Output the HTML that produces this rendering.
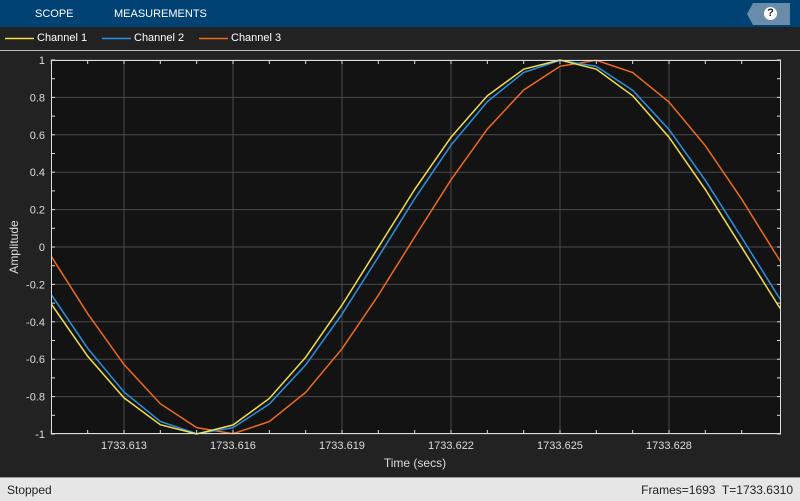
<!DOCTYPE html>
<html><head><meta charset="utf-8"><style>
body{margin:0;width:800px;height:500px;overflow:hidden;background:#222;font-family:"Liberation Sans",sans-serif;position:relative}
.hdr{position:absolute;left:0;top:0;width:800px;height:27px;background:#004274}
.hdr span{position:absolute;top:8px;color:#fff;font-size:11px}
.help{position:absolute;left:747px;top:3px;width:43px;height:22px;background:#6a8cab;clip-path:polygon(0 50%,6px 0,100% 0,100% 100%,6px 100%)}
.q{position:absolute;left:764px;top:7px;width:13px;height:13px;border-radius:50%;background:#fff;color:#222;font-size:11px;font-weight:bold;text-align:center;line-height:13px}
.leg{position:absolute;top:32px;color:#fff;font-size:11px}
.sep{position:absolute;left:0;top:50px;width:800px;height:1px;background:#bbb}
.status{position:absolute;left:0;top:477px;width:800px;height:23px;background:#e6e6e6;border-top:1px solid #999;color:#222;font-size:12px}
</style></head><body>
<div class="hdr"><span style="left:35px">SCOPE</span><span style="left:114px">MEASUREMENTS</span></div>
<div class="help"></div><div class="q">?</div>
<svg style="position:absolute;left:0;top:0" width="800" height="60">
<line x1="5" y1="38.5" x2="34" y2="38.5" stroke="#f2df4a" stroke-width="1.5"/>
<line x1="102" y1="38.5" x2="131" y2="38.5" stroke="#2d8fe0" stroke-width="1.5"/>
<line x1="199" y1="38.5" x2="228" y2="38.5" stroke="#f06a1e" stroke-width="1.5"/>
</svg>
<span class="leg" style="left:37px">Channel 1</span>
<span class="leg" style="left:134px">Channel 2</span>
<span class="leg" style="left:231px">Channel 3</span>
<div class="sep"></div>
<svg id="p" style="position:absolute;left:0;top:0" width="800" height="477" font-family="Liberation Sans, sans-serif" font-size="11" fill="#ddd"></svg>
<div class="status"><span style="position:absolute;left:7px;top:5px">Stopped</span><span style="position:absolute;right:7px;top:5px">Frames=1693&nbsp; T=1733.6310</span></div>
<script>
var s='',L=51,R=781,T=60,B=434;
s+='<rect x="'+L+'" y="'+T+'" width="'+(R-L)+'" height="'+(B-T)+'" fill="#131313"/>';
function Y(v){return 247-v*187;}
for(var k=-10;k<=10;k++){var y=Y(k/10);
 if(k%2==0){s+='<line x1="'+L+'" x2="'+R+'" y1="'+y+'" y2="'+y+'" stroke="#4a4a4a"/>';
  s+='<text x="45" y="'+(y+4)+'" text-anchor="end">'+(k==0?'0':(k/10).toString())+'</text>';}
 s+='<line x1="'+L+'" x2="'+(L+4)+'" y1="'+y+'" y2="'+y+'" stroke="#ddd"/><line x1="'+(R-4)+'" x2="'+R+'" y1="'+y+'" y2="'+y+'" stroke="#ddd"/>';}
var step=109/3;
for(var k=0;k<21;k++){var x=51.33+k*step;if(x>R-10)break;
 if((k-2)%3==0){s+='<line x1="'+x+'" x2="'+x+'" y1="'+T+'" y2="'+B+'" stroke="#4a4a4a"/>';
  s+='<text x="'+x+'" y="'+(B+15)+'" text-anchor="middle">'+(1733.613+(k-2)/1000).toFixed(3)+'</text>';}
 s+='<line x1="'+x+'" x2="'+x+'" y1="'+T+'" y2="'+(T+4)+'" stroke="#ddd"/><line x1="'+x+'" x2="'+x+'" y1="'+(B-4)+'" y2="'+B+'" stroke="#ddd"/>';}
var ch=[[560,'#f2df4a'],[566,'#2d8fe0'],[590,'#f06a1e']];
ch.reverse().forEach(function(c){var pts=[];for(var k=-1;k<23;k++){var x=51.33+k*step;var v=Math.cos(2*Math.PI*(x-c[0])/726);pts.push([x,Y(v)]);}
 s+='<polyline points="'+pts.map(function(p){return p[0].toFixed(1)+','+p[1].toFixed(1)}).join(' ')+'" fill="none" stroke="'+c[1]+'" stroke-width="1.5"/>';});
s='<defs><clipPath id="c"><rect x="'+L+'" y="'+(T-2)+'" width="'+(R-L)+'" height="'+(B-T+4)+'"/></clipPath></defs>'+s;
s=s.replace(/<polyline/g,'<polyline clip-path="url(#c)"');
s+='<rect x="'+L+'.5" y="'+T+'.5" width="'+(R-L-1)+'" height="'+(B-T-1)+'" fill="none" stroke="#ddd"/>';
s+='<text x="415" y="467" text-anchor="middle" font-size="12">Time (secs)</text>';
s+='<text transform="translate(18,247) rotate(-90)" text-anchor="middle" font-size="12">Amplitude</text>';
document.getElementById('p').innerHTML=s;
</script>
</body></html>
